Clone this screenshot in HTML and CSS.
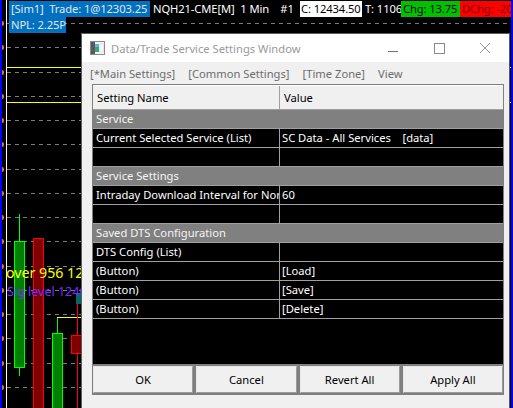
FILE: index.html
```html
<!DOCTYPE html>
<html>
<head>
<meta charset="utf-8">
<link rel="stylesheet" href="styles.css">
</head>
<body>
<div class="screen">
  <div class="edge edge-left"></div>
  <div class="edge edge-right"></div>
  <div class="axis-line"></div>
  <div class="gridlines">
    <div class="gl"></div><div class="gl"></div><div class="gl"></div><div class="gl"></div>
    <div class="gl"></div><div class="gl"></div><div class="gl"></div><div class="gl"></div>
    <div class="gl"></div><div class="gl"></div><div class="gl"></div><div class="gl"></div>
    <div class="gl"></div><div class="gl"></div><div class="gl"></div><div class="gl"></div>
  </div>
  <div class="yline yline-a"></div>
  <div class="yline yline-b"></div>

  <div class="wick wick-1"></div>
  <div class="body bull body-1"></div>
  <div class="body bear body-2"></div>
  <div class="wick wick-3"></div>
  <div class="body bull body-3"></div>
  <div class="hook"></div>
  <div class="teal"></div>
  <div class="wick wick-4"></div>
  <div class="body bear body-4"></div>

  <div class="label-over">over 956 12</div>
  <div class="label-sig">Sig level 1240</div>

  <div class="topbar">
    <div class="tline">
      <span class="tb blue w-sim">[Sim1]&nbsp; Trade: 1@12303.25</span>
      <span class="tb plain w-sym">NQH21-CME[M]&nbsp; 1 Min&nbsp;&nbsp;&nbsp; #1</span>
      <span class="tb white w-c">C: 12434.50</span>
      <span class="tb plain w-t">T: 1106</span>
      <span class="tb green w-chg">Chg: 13.75</span>
      <span class="tb red w-dchg">DChg: -20</span>
    </div>
    <div class="tline">
      <span class="tb blue w-npl">NPL: 2.25P</span>
    </div>
  </div>

  <div class="dialog">
    <div class="titlebar">
      <svg class="appicon" width="15" height="14" viewBox="0 0 15 14">
        <rect x="0.5" y="0.5" width="14" height="13" fill="#f4f4f4" stroke="#8a8a8a"/>
        <rect x="1" y="1" width="4" height="12" fill="#5a5a5a"/>
        <rect x="5" y="3" width="4" height="8" fill="#3aa57a"/>
        <rect x="5" y="3" width="4" height="3" fill="#5fb8d8"/>
        <rect x="10" y="3" width="3" height="8" fill="#ffffff" stroke="#c8c8c8" stroke-width="0.5"/>
      </svg>
      <span class="title">Data/Trade Service Settings Window</span>
      <div class="controls">
        <svg class="ctl" width="46" height="28" viewBox="0 0 46 28"><line x1="18" y1="17.5" x2="28" y2="17.5" stroke="#6f6f6f" stroke-width="1"/></svg>
        <svg class="ctl" width="46" height="28" viewBox="0 0 46 28"><rect x="18.5" y="9.5" width="10" height="10" fill="none" stroke="#8a8a8a" stroke-width="1"/></svg>
        <svg class="ctl" width="46" height="28" viewBox="0 0 46 28"><path d="M18 9 L28 19 M28 9 L18 19" stroke="#9a9a9a" stroke-width="1"/></svg>
      </div>
    </div>
    <div class="client">
      <div class="menubar">
        <span class="mi">[*Main Settings]</span>
        <span class="mi">[Common Settings]</span>
        <span class="mi">[Time Zone]</span>
        <span class="mi mi-view">View</span>
      </div>
      <div class="panel">
        <div class="table">
          <div class="row head"><div class="c1">Setting Name</div><div class="c2">Value</div></div>
          <div class="row group">Service</div>
          <div class="row"><div class="c1">Current Selected Service (List)</div><div class="c2">SC Data - All Services    [data]</div></div>
          <div class="row"><div class="c1"></div><div class="c2"></div></div>
          <div class="row group">Service Settings</div>
          <div class="row"><div class="c1">Intraday Download Interval for Non-Historical</div><div class="c2">60</div></div>
          <div class="row"><div class="c1"></div><div class="c2"></div></div>
          <div class="row group">Saved DTS Configuration</div>
          <div class="row"><div class="c1">DTS Config (List)</div><div class="c2"></div></div>
          <div class="row"><div class="c1">(Button)</div><div class="c2">[Load]</div></div>
          <div class="row"><div class="c1">(Button)</div><div class="c2">[Save]</div></div>
          <div class="row"><div class="c1">(Button)</div><div class="c2">[Delete]</div></div>
        </div>
        <div class="buttons">
          <button class="btn">OK</button>
          <button class="btn">Cancel</button>
          <button class="btn">Revert All</button>
          <button class="btn">Apply All</button>
        </div>
      </div>
    </div>
  </div>
</div>
</body>
</html>
```
FILE: styles.css
```css
* { box-sizing: border-box; }
html, body { margin: 0; padding: 0; background: #000; }
body { width: 513px; height: 408px; overflow: hidden; font-family: "Noto Sans", "Open Sans", sans-serif; }

.screen { position: relative; width: 513px; height: 408px; background: #000; overflow: hidden; }

.edge { position: absolute; top: 0; bottom: 0; width: 2px; background: #0000ff; z-index: 5; }
.edge-left { left: 0; }
.edge-right { right: 0; }
.axis-line { position: absolute; left: 6px; top: 0; bottom: 0; width: 1px; background: #ffffff; }

.gridlines { position: absolute; left: 0; right: 0; top: 23px; display: flex; flex-direction: column; gap: 23.25px; }
.gl { position: relative; height: 1px; margin-left: 7px; background: repeating-linear-gradient(90deg, #7d7d7d 0 4px, transparent 4px 8px); }
.gl::before { content: ""; position: absolute; left: -5px; top: -2px; width: 2px; height: 5px; background: #e07818; border-radius: 0 2px 2px 0; }

.yline { position: absolute; left: 7px; right: 0; height: 1px; background: #ffff00; }
.yline-a { top: 67px; }
.yline-b { top: 102px; }

.wick { position: absolute; width: 1px; }
.body { position: absolute; border: 1px solid; }
.bull { background: #008000; border-color: #00ff00; }
.bear { background: #800000; border-color: #ff0000; }
.wick-1 { left: 19px; top: 214px; height: 162px; background: #00ff00; }
.body-1 { left: 14px; top: 241px; width: 11px; height: 127px; }
.body-2 { left: 33px; top: 238px; width: 11px; height: 180px; }
.wick-3 { left: 57px; top: 317px; height: 16px; background: #00ff00; }
.body-3 { left: 52px; top: 333px; width: 11px; height: 90px; }
.hook { position: absolute; left: 57px; top: 317px; width: 26px; height: 1px; background: #ffff00; }
.teal { position: absolute; left: 76px; top: 293px; width: 8px; height: 11px; background: #006868; }
.wick-4 { left: 77px; top: 303px; height: 110px; background: #ff0000; }
.body-4 { left: 71px; top: 335px; width: 11px; height: 19px; }

.label-over { position: absolute; left: 6px; top: 263px; color: #ffff00; font-size: 14.2px; line-height: 20px; white-space: nowrap; }
.label-sig { position: absolute; left: 7px; top: 285px; color: #7a2cff; font-size: 12.5px; line-height: 14px; white-space: nowrap; }

.topbar { position: absolute; left: 9px; top: 1px; font-size: 11.2px; letter-spacing: -0.1px; }
.tline { display: flex; height: 16px; line-height: 16px; }
.tb { white-space: pre; overflow: hidden; }
.blue { background: #0070c0; color: #e6e6e6; padding-left: 2px; }
.plain { color: #ffffff; padding-left: 3px; }
.white { background: #ffffff; color: #000; padding-left: 1px; }
.green { background: #00c000; color: #000; padding-left: 2px; }
.red { background: #ff0000; color: #7a0000; padding-left: 2px; }
.w-sim { width: 141px; }
.w-sym { width: 150px; }
.w-c { width: 62px; }
.w-t { width: 39px; }
.w-chg { width: 59px; }
.w-dchg { width: 51px; }
.w-npl { width: 57px; }

.dialog { position: absolute; left: 81px; top: 33px; width: 429px; height: 390px; border: 1px solid #5c5c5c; background: #f0f0f0; z-index: 4; display: flex; flex-direction: column; font-size: 11.2px; }
.titlebar { height: 28px; background: #ffffff; display: flex; align-items: center; padding-left: 8px; flex: none; }
.appicon { flex: none; }
.title { margin-left: 6px; color: #999999; white-space: nowrap; }
.controls { margin-left: auto; display: flex; margin-right: 1px; }
.ctl { display: block; }

.client { flex: 1; display: flex; flex-direction: column; padding: 0 5px 0 10px; }
.menubar { height: 22px; display: flex; align-items: center; margin-left: -10px; padding-left: 2px; color: #6d6d6d; }
.mi { padding: 0 6px; white-space: nowrap; }
.mi + .mi { margin-left: 1px; }
.mi-view { margin-left: 5px; }

.panel { border: 1px solid #7f7f7f; display: flex; flex-direction: column; height: 311px; flex: none; }
.table { flex: 1; background: #000; display: flex; flex-direction: column; }
.row { display: flex; height: 19px; border-bottom: 1px solid #a0a0a0; color: #ffffff; line-height: 18px; flex: none; }
.c1 { width: 187px; border-right: 1px solid #a0a0a0; padding-left: 3px; white-space: nowrap; overflow: hidden; flex: none; }
.c2 { flex: 1; padding-left: 2px; white-space: pre; overflow: hidden; }
.row.head { height: 25px; background: #f0f0f0; color: #000; line-height: 24px; border-top: 1px solid #ffffff; }
.row.head .c1 { padding-left: 4px; }
.row.head .c2 { padding-left: 4px; }
.row.group { background: #808080; padding-left: 3px; color: #f4f4f4; }

.buttons { display: flex; gap: 3px; background: #808080; padding: 2px 0 1px; flex: none; }
.btn { flex: 1; height: 27px; background: #f0f0f0; border: 1px solid #9a9a9a; border-top-color: #e8e8e8; border-left-color: #e8e8e8; font-family: inherit; font-size: 11.2px; color: #000; padding: 0; }
```
